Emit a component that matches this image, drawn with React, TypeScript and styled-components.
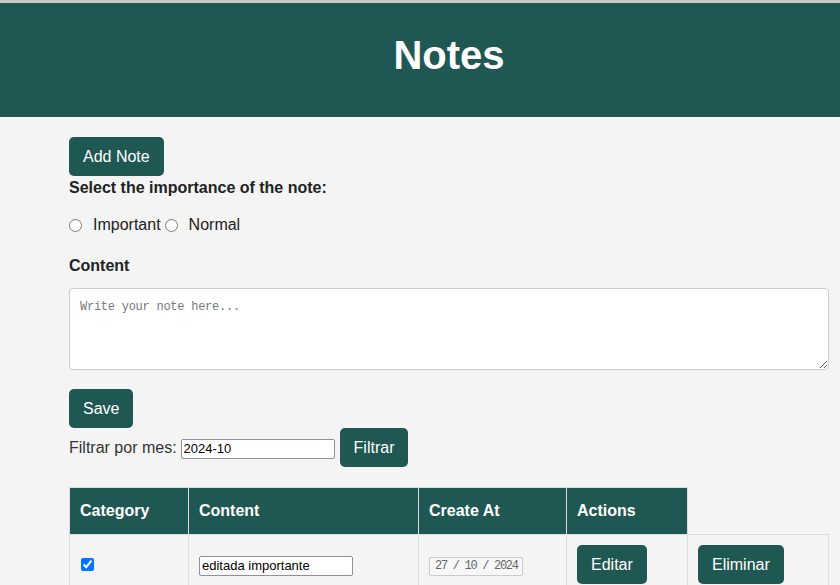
import React from 'react';
import styled, { createGlobalStyle } from 'styled-components';

const GlobalStyle = createGlobalStyle`
  html, body {
    margin: 0;
    padding: 0;
    background: #f4f4f4;
    font-family: "Liberation Sans", Arial, sans-serif;
    color: #222;
  }
  body {
    border-top: 3px solid #c9c9c9;
  }
`;

const green = '#1f5753';

const Header = styled.header`
  height: 114px;
  background-color: ${green};
  display: flex;
  align-items: center;
  justify-content: center;
  padding: 0 0 10px 58px;
  box-sizing: border-box;

  h1 {
    margin: 0;
    color: white;
    font-size: 40px;
    font-weight: bold;
  }
`;

const Main = styled.main`
  width: 760px;
  margin-left: 69px;
  padding-top: 20px;
`;

const Button = styled.button`
  background-color: ${green};
  color: white;
  border: none;
  border-radius: 5px;
  padding: 1px 14px 0;
  height: 39px;
  font-family: "Liberation Sans", Arial, sans-serif;
  font-size: 16px;
  cursor: pointer;
`;

const Label = styled.div<{ top: number }>`
  font-weight: bold;
  font-size: 16px;
  line-height: 18px;
  margin-top: ${(p) => p.top}px;
`;

const RadioRow = styled.div`
  display: flex;
  align-items: center;
  height: 18px;
  margin-top: 19px;
  font-size: 16px;

  input {
    width: 13px;
    height: 13px;
    margin: 0 11px 0 0;
  }
  span {
    margin-right: 4px;
  }
`;

const TextArea = styled.textarea`
  display: block;
  box-sizing: border-box;
  width: 760px;
  height: 82px;
  margin-top: 13px;
  padding: 11px 10px 10px;
  border: 1px solid #ccc;
  border-radius: 4px;
  background: white;
  font-family: "Liberation Mono", monospace;
  font-size: 12px;
  letter-spacing: -0.25px;

  &::placeholder {
    color: #777;
  }
`;

const SaveRow = styled.div`
  margin-top: 19px;
  display: flex;
`;

const FilterRow = styled.div`
  display: flex;
  align-items: center;
  font-size: 16px;
  color: #333;

  input {
    box-sizing: border-box;
    width: 154px;
    height: 20px;
    margin: 2px 5px 0 4px;
    padding: 0 2px;
    border: 1px solid #8f8f9d;
    border-radius: 2px;
    font-family: "Liberation Sans", Arial, sans-serif;
    font-size: 13px;
    background: white;
  }
`;

const Table = styled.table`
  margin-top: 20px;
  width: 760px;
  border-collapse: collapse;
  font-size: 16px;
`;

const Th = styled.th<{ w: number }>`
  width: ${(p) => p.w}px;
  height: 47px;
  box-sizing: border-box;
  padding: 0 10px;
  background-color: ${green};
  color: white;
  text-align: left;
  border: 1px solid #ddd;
`;

const Td = styled.td`
  padding: 10px;
  border: 1px solid #ddd;
  vertical-align: middle;

  input[type='checkbox'] {
    margin: 4px 0 0 1px;
    width: 13px;
    height: 13px;
  }
`;

const CellInput = styled.input`
  box-sizing: border-box;
  width: 154px;
  height: 20px;
  margin-top: 2px;
  padding: 0 2px;
  border: 1px solid #8f8f9d;
  border-radius: 2px;
  font-family: "Liberation Sans", Arial, sans-serif;
  font-size: 13px;
  background: white;
  color: #000;
`;

const DateBox = styled.span`
  display: inline-block;
  box-sizing: border-box;
  margin-top: 3px;
  height: 19px;
  line-height: 17px;
  padding: 0 4px 0 5px;
  border: 1px solid #ccc;
  border-radius: 2px;
  font-family: "Liberation Mono", monospace;
  font-size: 12px;
  letter-spacing: -1.3px;
  color: #666;
  background: #f7f7f7;
`;

export default function App() {
  return (
    <>
      <GlobalStyle />
      <Header>
        <h1>Notes</h1>
      </Header>
      <Main>
        <Button>Add Note</Button>
        <Label top={3}>Select the importance of the note:</Label>
        <RadioRow>
          <input type="radio" name="importance" />
          <span>Important</span>
          <input type="radio" name="importance" />
          <span>Normal</span>
        </RadioRow>
        <Label top={23}>Content</Label>
        <TextArea placeholder="Write your note here..." />
        <SaveRow>
          <Button>Save</Button>
        </SaveRow>
        <FilterRow>
          Filtrar por mes:
          <input type="text" defaultValue="2024-10" />
          <Button>Filtrar</Button>
        </FilterRow>
        <Table>
          <thead>
            <tr>
              <Th w={119}>Category</Th>
              <Th w={230}>Content</Th>
              <Th w={148}>Create At</Th>
              <Th w={121}>Actions</Th>
            </tr>
          </thead>
          <tbody>
            <tr>
              <Td>
                <input type="checkbox" defaultChecked />
              </Td>
              <Td>
                <CellInput type="text" defaultValue="editada importante" />
              </Td>
              <Td>
                <DateBox>27 / 10 / 2024</DateBox>
              </Td>
              <Td>
                <Button>Editar</Button>
              </Td>
              <Td>
                <Button>Eliminar</Button>
              </Td>
            </tr>
          </tbody>
        </Table>
      </Main>
    </>
  );
}
